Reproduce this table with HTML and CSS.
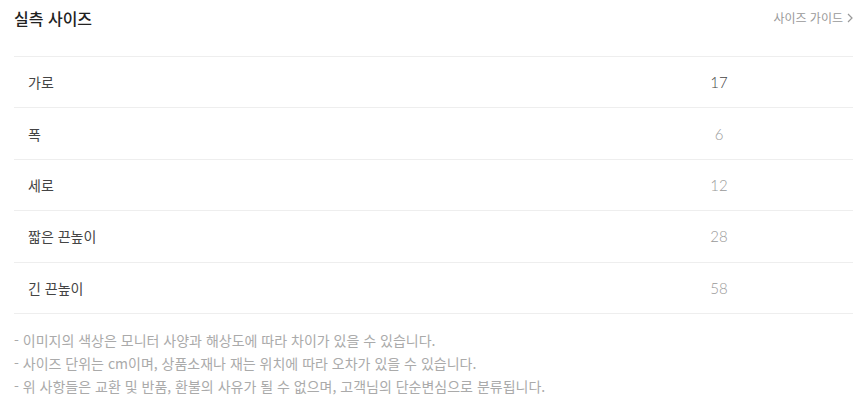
FILE: index.html
```html
<!DOCTYPE html>
<html lang="ko">
<head>
<meta charset="utf-8">
<link rel="stylesheet" href="styles.css">
</head>
<body>
<div class="wrap">
  <div class="head">
    <h2 class="title">실측 사이즈</h2>
    <a class="guide">사이즈 가이드 <svg class="chev" width="6" height="10" viewBox="0 0 6 10"><path d="M1 1 L5 5 L1 9" fill="none" stroke="#999" stroke-width="1.2"/></svg></a>
  </div>
  <div class="table">
    <div class="row"><div class="label">가로</div><div class="val dark">17</div></div>
    <div class="row"><div class="label">폭</div><div class="val">6</div></div>
    <div class="row"><div class="label">세로</div><div class="val">12</div></div>
    <div class="row"><div class="label">짧은 끈높이</div><div class="val">28</div></div>
    <div class="row"><div class="label">긴 끈높이</div><div class="val">58</div></div>
  </div>
  <ul class="notes">
    <li>- 이미지의 색상은 모니터 사양과 해상도에 따라 차이가 있을 수 있습니다.</li>
    <li>- 사이즈 단위는 cm이며, 상품소재나 재는 위치에 따라 오차가 있을 수 있습니다.</li>
    <li>- 위 사항들은 교환 및 반품, 환불의 사유가 될 수 없으며, 고객님의 단순변심으로 분류됩니다.</li>
  </ul>
</div>
</body>
</html>
```

FILE: styles.css
```css
* { box-sizing: border-box; }
html, body { margin: 0; padding: 0; background: #fff; }
body { font-family: "Noto Sans CJK KR", "Noto Sans", sans-serif; }
.wrap { padding: 0 7px 0 14px; }
.head {
  height: 35px;
  margin-bottom: 21px;
  display: flex;
  align-items: center;
  justify-content: space-between;
}
.title {
  margin: 0;
  font-size: 16px;
  font-weight: 500;
  color: #222;
}
.guide {
  font-size: 12px;
  color: #999;
  display: flex;
  align-items: center;
  gap: 4px;
}
.chev { display: block; }
.table { border-bottom: 1px solid #eee; }
.row {
  display: grid;
  grid-template-columns: 1fr 268px;
  align-items: center;
  height: 51.4px;
  border-top: 1px solid #eee;
}
.label {
  padding-left: 14px;
  font-size: 14px;
  color: #444;
}
.val {
  text-align: center;
  font-family: Lato, "Open Sans", sans-serif;
  font-weight: 300;
  font-size: 15px;
  color: #999;
}
.val.dark { color: #444; }
.notes {
  list-style: none;
  margin: 15px 0 0;
  padding: 0;
}
.notes li {
  font-size: 14px;
  line-height: 23px;
  color: #aaa;
}
```
